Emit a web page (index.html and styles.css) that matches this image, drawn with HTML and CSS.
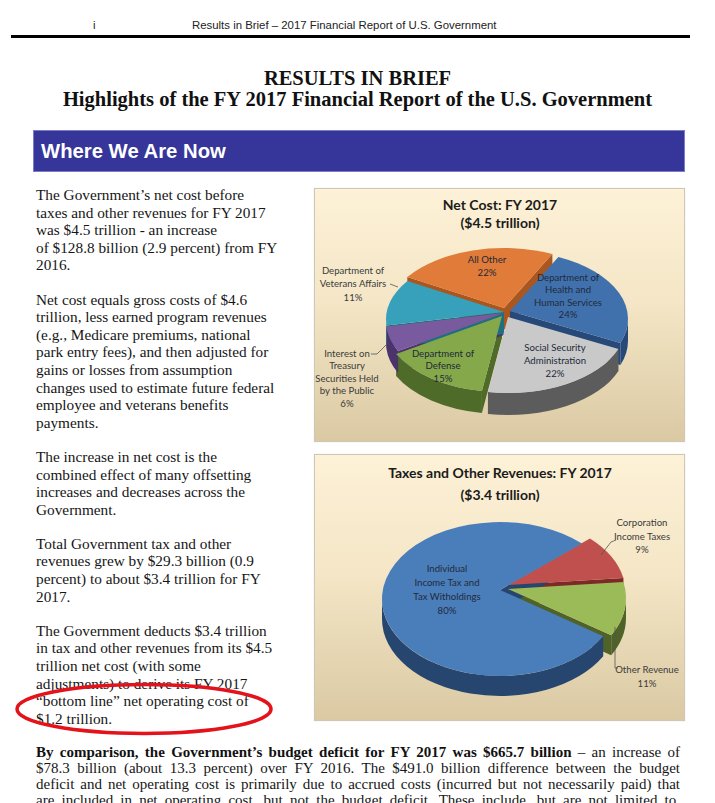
FILE: index.html
```html
<!DOCTYPE html>
<html lang="en">
<head>
<meta charset="utf-8">
<title>Results in Brief – 2017 Financial Report of U.S. Government</title>
<link rel="stylesheet" href="styles.css">
</head>
<body>
<div class="page">
  <header class="running-head">
    <span class="folio">i</span>
    <span class="running-title">Results in Brief – 2017 Financial Report of U.S. Government</span>
  </header>

  <h1 class="title">RESULTS IN BRIEF<br>Highlights of the FY 2017 Financial Report of the U.S. Government</h1>

  <div class="section-bar"><h2>Where We Are Now</h2></div>

  <div class="content">
    <div class="text-col">
      <p>The Government’s net cost before<br>taxes and other revenues for FY 2017<br>was $4.5 trillion - an increase<br>of $128.8 billion (2.9 percent) from FY<br>2016.</p>
      <p>Net cost equals gross costs of $4.6<br>trillion, less earned program revenues<br>(e.g., Medicare premiums, national<br>park entry fees), and then adjusted for<br>gains or losses from assumption<br>changes used to estimate future federal<br>employee and veterans benefits<br>payments.</p>
      <p>The increase in net cost is the<br>combined effect of many offsetting<br>increases and decreases across the<br>Government.</p>
      <p>Total Government tax and other<br>revenues grew by $29.3 billion (0.9<br>percent) to about $3.4 trillion for FY<br>2017.</p>
      <p>The Government deducts $3.4 trillion<br>in tax and other revenues from its $4.5<br>trillion net cost (with some<br>adjustments) to derive its FY 2017<br>“bottom line” net operating cost of<br>$1.2 trillion.</p>
    </div>

    <div class="chart-col">
      <figure class="chart chart-cost">
        <svg class="chart-svg" width="369" height="252" viewBox="1 1 369 252">
          <g id="pie-cost"></g>
          <text class="chart-title" x="186" y="22">Net Cost: FY 2017</text>
          <text class="chart-title" x="186" y="40">($4.5 trillion)</text>

          <g class="lbl lbl-out">
            <text x="39" y="85.5">Department of</text>
            <text x="39" y="98.5">Veterans Affairs</text>
            <text x="39" y="112.5">11%</text>
            <text x="33" y="168.5">Interest on</text>
            <text x="33" y="181">Treasury</text>
            <text x="33" y="193.5">Securities Held</text>
            <text x="33" y="206">by the Public</text>
            <text x="33" y="218.5">6%</text>
          </g>
          <polyline class="leader" points="76,96 84,99"/>
          <polyline class="leader" points="57,166 63,166 72,157"/>

          <g class="lbl lbl-in">
            <text x="173" y="74.5">All Other</text>
            <text x="173" y="87.5">22%</text>
            <text x="254" y="92.5">Department of</text>
            <text x="254" y="105">Health and</text>
            <text x="254" y="117.5">Human Services</text>
            <text x="254" y="130">24%</text>
            <text x="241" y="162.5">Social Security</text>
            <text x="241" y="175.5">Administration</text>
            <text x="241" y="188.5">22%</text>
            <text x="129" y="168.5">Department of</text>
            <text x="129" y="181">Defense</text>
            <text x="129" y="193.5">15%</text>
          </g>
        </svg>
      </figure>

      <figure class="chart chart-rev">
        <svg class="chart-svg" width="369" height="265" viewBox="1 1 369 265">
          <g id="pie-rev"></g>
          <text class="chart-title" x="186" y="24">Taxes and Other Revenues: FY 2017</text>
          <text class="chart-title" x="186" y="46">($3.4 trillion)</text>

          <g class="lbl lbl-out">
            <text x="328" y="71.5">Corporation</text>
            <text x="328" y="85.5">Income Taxes</text>
            <text x="328" y="98.5">9%</text>
            <text x="333" y="218.5">Other Revenue</text>
            <text x="333" y="232.5">11%</text>
          </g>
          <polyline class="leader" points="287,101 297,88 302,86"/>
          <polyline class="leader" points="301,173 301,214 304,214"/>

          <g class="lbl lbl-in">
            <text x="133" y="117.5">Individual</text>
            <text x="133" y="131.5">Income Tax and</text>
            <text x="133" y="145.5">Tax Witholdings</text>
            <text x="133" y="159.5">80%</text>
          </g>
        </svg>
      </figure>
    </div>
  </div>

  <p class="summary">
    <span class="jline"><b>By comparison, the Government’s budget deficit for FY 2017 was $665.7 billion</b> – an increase of</span>
    <span class="jline">$78.3 billion (about 13.3 percent) over FY 2016. The $491.0 billion difference between the budget</span>
    <span class="jline">deficit and net operating cost is primarily due to accrued costs (incurred but not necessarily paid) that</span>
    <span class="jline">are included in net operating cost, but not the budget deficit. These include, but are not limited to,</span>
  </p>

  <svg class="highlight-ring" width="264" height="58" viewBox="0 0 264 58">
    <ellipse cx="132" cy="29" rx="127" ry="24.5" fill="none" stroke="#e3121b" stroke-width="3.5"/>
  </svg>
</div>
<script src="script.js"></script>
</body>
</html>
```

FILE: styles.css
```css
body {
  margin: 0;
  background: #ffffff;
}

.page {
  position: relative;
  width: 715px;
  height: 803px;
  overflow: hidden;
  font-family: "Liberation Serif", "Times New Roman", serif;
  color: #161616;
}

.running-head {
  display: flex;
  margin-left: 11px;
  width: 679px;
  padding-top: 19px;
  padding-bottom: 3px;
  border-bottom: 3px solid #000;
  font-family: "Liberation Sans", Arial, sans-serif;
  font-size: 11.4px;
  line-height: 13px;
  color: #222;
}

.folio {
  margin-left: 82px;
  width: 99px;
}

.title {
  margin: 30px 0 0;
  font-family: "Liberation Serif", "Times New Roman", serif;
  font-weight: bold;
  font-size: 20.5px;
  line-height: 21px;
  text-align: center;
  color: #111;
}

.section-bar {
  display: flex;
  align-items: center;
  box-sizing: border-box;
  margin: 20px 0 0 33px;
  width: 652px;
  height: 42px;
  padding-left: 7px;
  background: #35359a;
  border: 1px solid #7d7dc6;
}

.section-bar h2 {
  margin: 0;
  font-family: "Liberation Sans", Arial, sans-serif;
  font-weight: bold;
  font-size: 20.3px;
  line-height: 1;
  color: #ffffff;
}

.content {
  display: flex;
  margin: 14px 0 0 36px;
}

.text-col {
  width: 278px;
  font-size: 15.3px;
  line-height: 17.6px;
}

.text-col p {
  margin: 0 0 16.6px;
  white-space: nowrap;
}

.text-col p:last-child {
  margin-bottom: 0;
}

.chart-col {
  display: flex;
  flex-direction: column;
  gap: 12px;
  margin-top: 2px;
}

.chart {
  margin: 0;
  width: 371px;
  box-sizing: border-box;
  border: 1px solid #cfc6b3;
  background: linear-gradient(#fdf1d7 0%, #f4e6c6 45%, #dac9a3 100%);
  box-shadow: 0 0 1px rgba(0, 0, 0, 0.15);
}

.chart-cost { height: 254px; }
.chart-rev { height: 267px; }

.chart-svg {
  display: block;
}

.chart-title {
  font-family: Lato, "Open Sans", sans-serif;
  font-weight: bold;
  font-size: 14px;
  fill: #1b1b1b;
  text-anchor: middle;
}

.lbl text {
  font-family: Lato, "Open Sans", sans-serif;
  font-size: 9.6px;
  text-anchor: middle;
}

.lbl-out text { fill: #3b3b3b; }
.lbl-in text { fill: #222a3a; }

.leader {
  fill: none;
  stroke: #555;
  stroke-width: 0.8;
}

.summary {
  margin: 16.4px 0 0 36px;
  width: 644px;
  font-size: 15px;
  line-height: 16px;
}

.jline {
  display: block;
  white-space: nowrap;
  text-align: justify;
  text-align-last: justify;
}

.summary b {
  font-weight: bold;
  color: #111;
}

.highlight-ring {
  position: absolute;
  left: 12px;
  top: 680px;
}
```

FILE: script.js
```js
(function () {
  var NS = "http://www.w3.org/2000/svg";
  var charts = [
    { id: "pie-cost", cx: 191, cy: 132, ax: 191, ay: 124, rx: 118, ry: 68, d: 22, slices: [
      { a1: -55, a2: 24.2, top: "#e07b39", side: "#a9561f", ex: [-1, -4] },
      { a1: 24.2, a2: 110.6, top: "#4071ad", side: "#27497a", ex: [5, -1] },
      { a1: 110.6, a2: 189.8, top: "#c9c9c9", side: "#5c5c5c", ex: [3, 5] },
      { a1: 189.8, a2: 243.8, top: "#84a84a", side: "#4f6b29", ex: [-3, 4] },
      { a1: 243.8, a2: 265.4, top: "#7a5a9e", side: "#4b346b", ex: [-1, 1] },
      { a1: 265.4, a2: 305, top: "#37a1bb", side: "#1f6f80", ex: [-1, 0] }
    ]},
    { id: "pie-rev", cx: 189, cy: 143, ax: 189, ay: 134, rx: 118, ry: 77, d: 20, slices: [
      { a1: 44, a2: 78, top: "#c0504d", side: "#7c2a28", ex: [5, -3] },
      { a1: 78, a2: 119, top: "#9bbb59", side: "#4f6228", ex: [5, 1] },
      { a1: 119, a2: 404, top: "#4a7ebb", side: "#27466f", ex: [-3, 2] }
    ]}
  ];

  function f(n) { return Math.round(n * 100) / 100; }
  function pt(c, a, dx, dy) {
    var r = a * Math.PI / 180;
    return [c.cx + dx + c.rx * Math.sin(r), c.cy + dy - c.ry * Math.cos(r)];
  }
  function norm(a) { return ((a % 360) + 360) % 360; }
  function path(g, d, fill, cls) {
    var p = document.createElementNS(NS, "path");
    p.setAttribute("d", d);
    p.setAttribute("fill", fill);
    if (cls) p.setAttribute("class", cls);
    g.appendChild(p);
  }

  charts.forEach(function (c) {
    var g = document.getElementById(c.id);
    if (!g) return;
    var radial = [], outer = [], tops = [];
    c.slices.forEach(function (s) {
      var dx = s.ex[0], dy = s.ex[1];
      var ax = c.ax + dx, ay = c.ay + dy;
      var p1 = pt(c, s.a1, dx, dy), p2 = pt(c, s.a2, dx, dy);
      var large = (s.a2 - s.a1) > 180 ? 1 : 0;
      tops.push(["M", f(ax), f(ay), "L", f(p1[0]), f(p1[1]), "A", c.rx, c.ry, 0, large, 1, f(p2[0]), f(p2[1]), "Z"].join(" "), s.top);

      [[s.a1, "start"], [s.a2, "end"]].forEach(function (e) {
        var n = norm(e[0]);
        var vis = e[1] === "start" ? (n > 180 && n < 360) : (n > 0 && n < 180);
        if (!vis) return;
        var p = pt(c, e[0], dx, dy);
        radial.push(["M", f(ax), f(ay), "L", f(p[0]), f(p[1]), "L", f(p[0]), f(p[1] + c.d), "L", f(ax), f(ay + c.d), "Z"].join(" "), s.side);
      });

      [[90, 270], [450, 630], [-270, -90]].forEach(function (r) {
        var st = Math.max(s.a1, r[0]), en = Math.min(s.a2, r[1]);
        if (en - st <= 0.01) return;
        var q1 = pt(c, st, dx, dy), q2 = pt(c, en, dx, dy);
        outer.push(["M", f(q1[0]), f(q1[1]), "A", c.rx, c.ry, 0, 0, 1, f(q2[0]), f(q2[1]),
          "L", f(q2[0]), f(q2[1] + c.d), "A", c.rx, c.ry, 0, 0, 0, f(q1[0]), f(q1[1] + c.d), "Z"].join(" "), s.side);
      });
    });
    for (var i = 0; i < radial.length; i += 2) path(g, radial[i], radial[i + 1]);
    for (var j = 0; j < outer.length; j += 2) path(g, outer[j], outer[j + 1]);
    for (var k = 0; k < tops.length; k += 2) path(g, tops[k], tops[k + 1], "pie-top");
  });
})();
```
